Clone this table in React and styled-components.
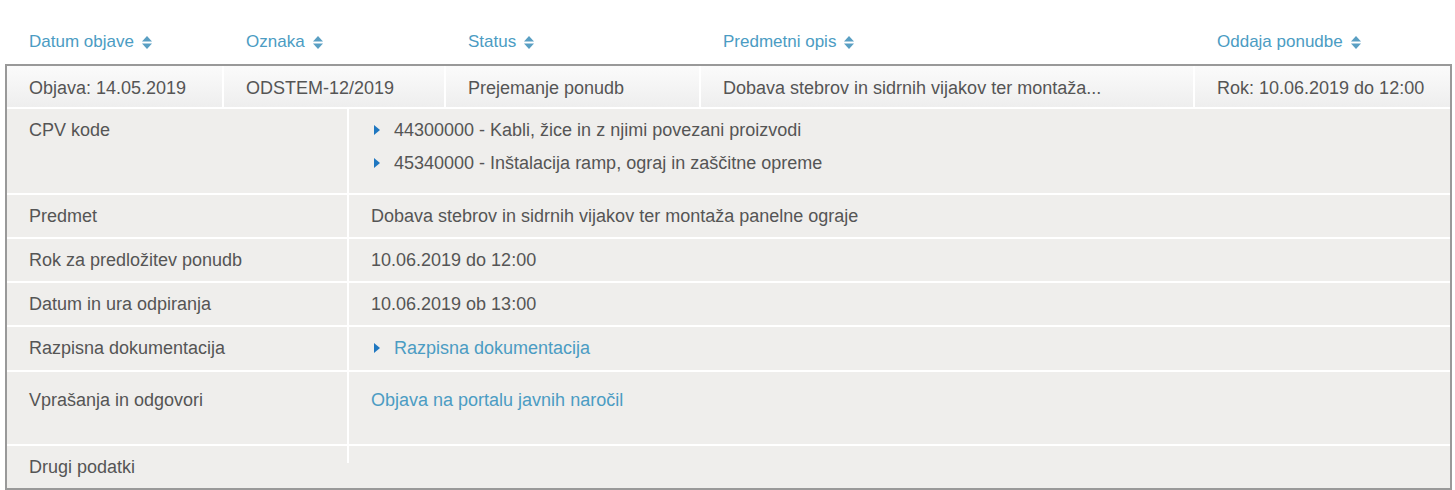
import React from "react";
import styled, { createGlobalStyle } from "styled-components";

const Global = createGlobalStyle`
  html, body { margin: 0; padding: 0; background: #fff; }
  body { font-family: "Liberation Sans", Arial, sans-serif; color: #555; }
`;

const Page = styled.div`
  width: 1447px;
  margin-left: 5px;
`;

const mainCols = "215px 222px 255px 494px 1fr";
const headCols = "217px 222px 255px 494px 1fr";

const HeadRow = styled.div`
  display: grid;
  grid-template-columns: ${headCols};
  padding: 0 2px;
`;

const HeadCell = styled.a`
  display: flex;
  align-items: center;
  gap: 8px;
  padding: 32px 22px 12px;
  line-height: 20px;
  font-size: 17px;
  color: #4b9cc3;
  text-decoration: none;
  cursor: pointer;
`;

const Table = styled.div`
  border: 2px solid #999;
  background: #efeeec;
`;

const MainRow = styled.div`
  display: grid;
  grid-template-columns: ${mainCols};
  border-bottom: 2px solid #fff;
`;

const MainCell = styled.div`
  padding: 12px 22px 9px;
  line-height: 20px;
  font-size: 18px;
  white-space: nowrap;
  background: linear-gradient(#fbfbfb, #eeeeee);
  border-left: ${(p) => (p.$first ? "0" : "2px solid #fff")};
`;

const DetailRow = styled.div`
  display: grid;
  grid-template-columns: 340px 1fr;
  align-items: ${(p) => (p.$short ? "start" : "stretch")};
  border-top: ${(p) => (p.$first ? "0" : "2px solid #fff")};
`;

const Label = styled.div`
  padding: ${(p) => p.$pad || "11px 22px 11px"};
  line-height: 20px;
  font-size: 18px;
`;

const Value = styled.div`
  border-left: 2px solid #fff;
  padding: ${(p) => p.$pad || "11px 22px 11px"};
  line-height: 20px;
  font-size: 18px;
  box-sizing: border-box;
  ${(p) => (p.$h ? `height: ${p.$h};` : "")}
`;

const List = styled.ul`
  list-style: none;
  margin: 0;
  padding: 0;
  display: flex;
  flex-direction: column;
  gap: 13px;
`;

const Item = styled.li`
  position: relative;
  padding-left: 23px;
  &::before {
    content: "";
    position: absolute;
    left: 3px;
    top: 5px;
    border-left: 6px solid #1f77c0;
    border-top: 5px solid transparent;
    border-bottom: 5px solid transparent;
  }
`;

const Link = styled.a`
  color: #4b9cc3;
  text-decoration: none;
  cursor: pointer;
`;

const SortIcon = () => (
  <svg width="10" height="13" viewBox="0 0 10 13" aria-hidden="true">
    <path d="M0 5.5 L5 0 L10 5.5 Z" fill="#5a9fc3" />
    <path d="M0 7.5 L5 13 L10 7.5 Z" fill="#5a9fc3" />
  </svg>
);

const headers = ["Datum objave", "Oznaka", "Status", "Predmetni opis", "Oddaja ponudbe"];
const main = [
  "Objava: 14.05.2019",
  "ODSTEM-12/2019",
  "Prejemanje ponudb",
  "Dobava stebrov in sidrnih vijakov ter montaža...",
  "Rok: 10.06.2019 do 12:00",
];

export default function App() {
  return (
    <>
      <Global />
      <Page>
        <HeadRow>
          {headers.map((h) => (
            <HeadCell key={h}>
              {h}
              <SortIcon />
            </HeadCell>
          ))}
        </HeadRow>
        <Table>
          <MainRow>
            {main.map((m, i) => (
              <MainCell key={i} $first={i === 0}>
                {m}
              </MainCell>
            ))}
          </MainRow>
          <DetailRow $first>
            <Label>CPV kode</Label>
            <Value $pad="11px 22px 20px">
              <List>
                <Item>44300000 - Kabli, žice in z njimi povezani proizvodi</Item>
                <Item>45340000 - Inštalacija ramp, ograj in zaščitne opreme</Item>
              </List>
            </Value>
          </DetailRow>
          <DetailRow>
            <Label>Predmet</Label>
            <Value>Dobava stebrov in sidrnih vijakov ter montaža panelne ograje</Value>
          </DetailRow>
          <DetailRow>
            <Label>Rok za predložitev ponudb</Label>
            <Value>10.06.2019 do 12:00</Value>
          </DetailRow>
          <DetailRow>
            <Label>Datum in ura odpiranja</Label>
            <Value>10.06.2019 ob 13:00</Value>
          </DetailRow>
          <DetailRow>
            <Label>Razpisna dokumentacija</Label>
            <Value $pad="11px 22px 12px">
              <List>
                <Item>
                  <Link>Razpisna dokumentacija</Link>
                </Item>
              </List>
            </Value>
          </DetailRow>
          <DetailRow>
            <Label $pad="18px 22px 12px">Vprašanja in odgovori</Label>
            <Value $pad="18px 22px 34px">
              <Link>Objava na portalu javnih naročil</Link>
            </Value>
          </DetailRow>
          <DetailRow $short>
            <Label>Drugi podatki</Label>
            <Value $h="17px" $pad="0" />
          </DetailRow>
        </Table>
      </Page>
    </>
  );
}
